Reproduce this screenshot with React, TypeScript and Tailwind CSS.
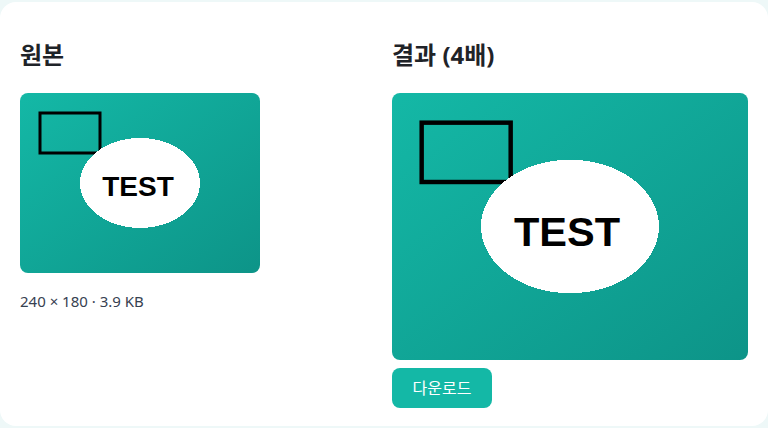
import React from "react";

function Picture({ className }: { className?: string }) {
  return (
    <svg viewBox="0 0 240 180" className={className} preserveAspectRatio="none">
      <defs>
        <linearGradient id="g" x1="0" y1="0" x2="1" y2="1">
          <stop offset="0" stopColor="#14b8a6" />
          <stop offset="1" stopColor="#0d9488" />
        </linearGradient>
      </defs>
      <rect x="0" y="0" width="240" height="180" fill="url(#g)" />
      <rect x="20" y="20" width="60" height="40" fill="none" stroke="#000" strokeWidth="3" />
      <ellipse cx="120" cy="90" rx="60" ry="45" fill="#fff" shapeRendering="crispEdges" />
      <text
        x="118"
        y="103"
        textAnchor="middle"
        fontFamily="'Liberation Sans', Arial, sans-serif"
        fontWeight="bold"
        fontSize="28"
        fill="#000"
      >
        TEST
      </text>
    </svg>
  );
}

export default function App() {
  return (
    <div className="h-[428px] w-[768px] overflow-hidden bg-[#eef8f8] pt-[2px]">
      <div
        className="h-[424px] rounded-2xl bg-white px-5 pt-[37px]"
        style={{ fontFamily: "'Noto Sans', 'Noto Sans CJK KR', sans-serif" }}
      >
        <div className="grid grid-cols-2 gap-4">
          <div>
            <h2 className="mb-[22px] text-[24px] font-bold leading-8 text-[#1f2328]">원본</h2>
            <div className="h-[180px] w-[240px] overflow-hidden rounded-lg">
              <Picture className="block h-full w-full" />
            </div>
            <p className="mt-[18px] text-[15px] leading-5 text-[#374151]">240 × 180 · 3.9 KB</p>
          </div>
          <div>
            <h2 className="mb-[22px] text-[24px] font-bold leading-8 text-[#1f2328]">결과 (4배)</h2>
            <div className="h-[267px] w-full overflow-hidden rounded-lg">
              <Picture className="block h-full w-full" />
            </div>
            <button className="mt-2 flex h-10 w-[100px] items-center justify-center rounded-lg bg-[#14b8a6] text-[16px] text-white">
              다운로드
            </button>
          </div>
        </div>
      </div>
    </div>
  );
}
